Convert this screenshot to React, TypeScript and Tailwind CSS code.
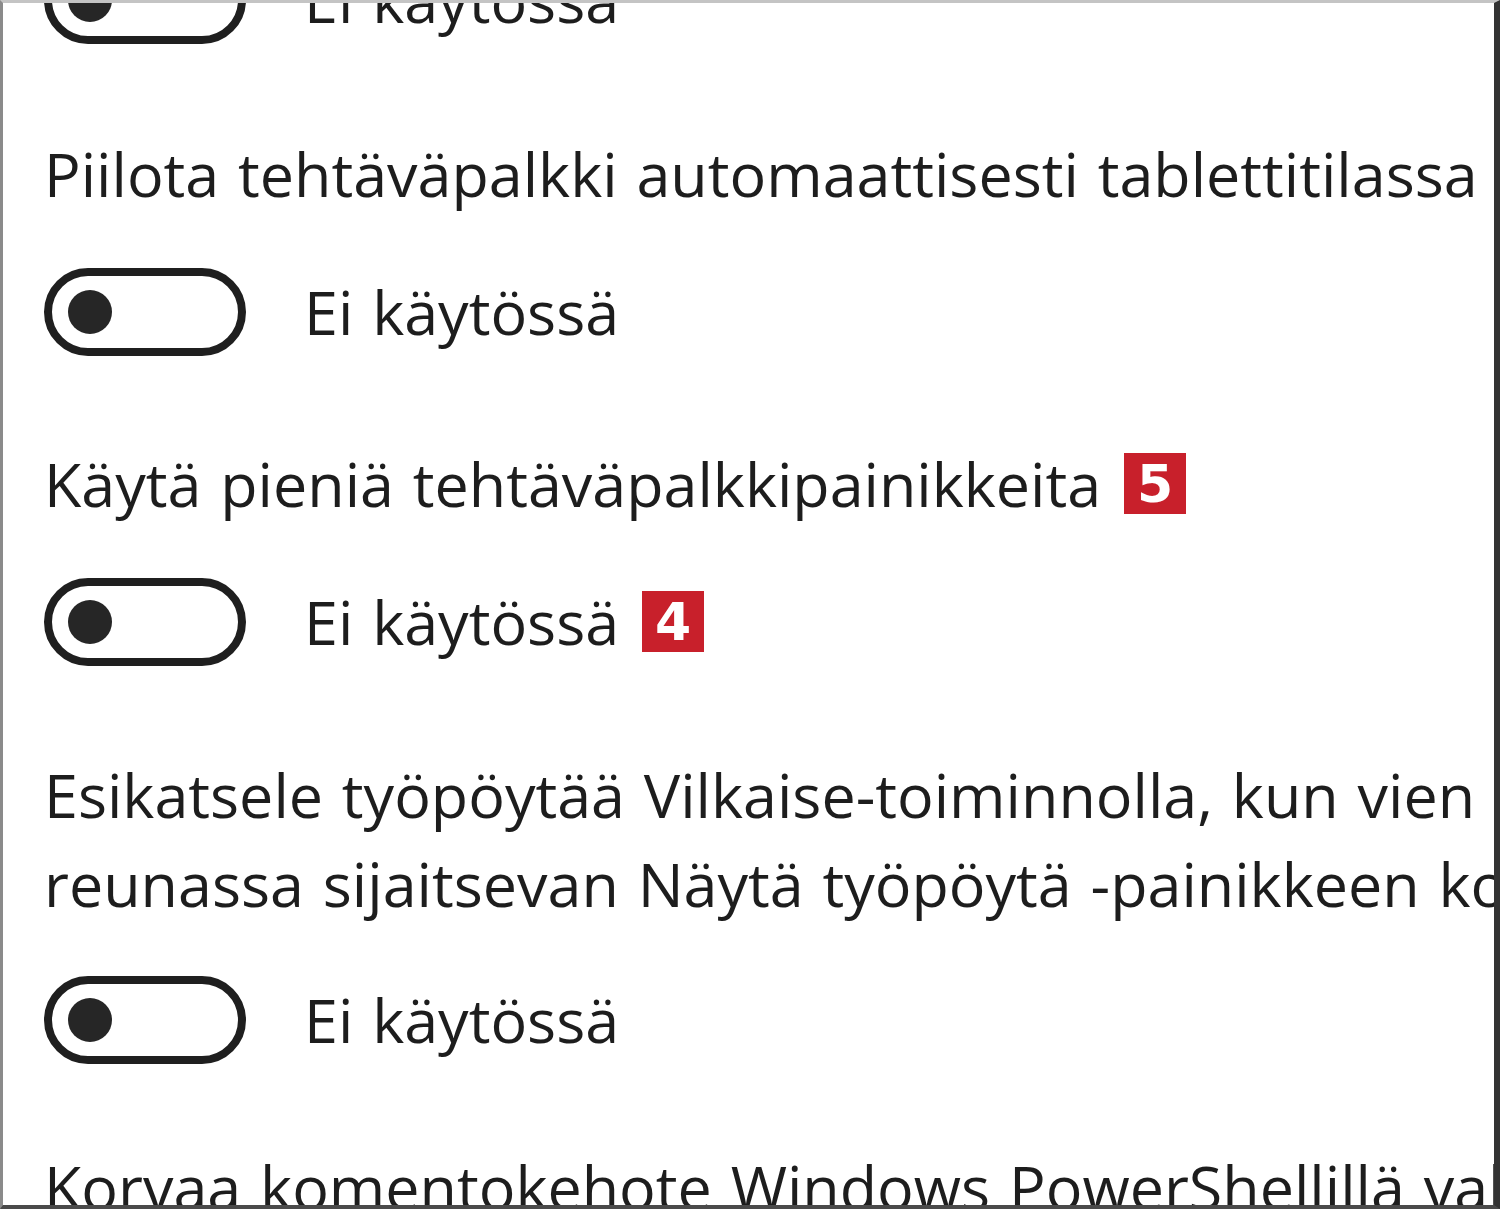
const FONT = "font-['Open_Sans',_'Noto_Sans',_sans-serif] [word-spacing:3px]"

function Toggle() {
  return (
    <div className="flex h-[88px] w-[202px] shrink-0 items-center rounded-full border-[8px] border-[#1f1f1f] pl-[16px]">
      <div className="h-[44px] w-[44px] rounded-full bg-[#262626]" />
    </div>
  )
}

function Badge({ n }: { n: string }) {
  return (
    <span className="ml-[23px] inline-flex h-[61px] w-[62px] items-center justify-center bg-[#c8202b] font-['DejaVu_Sans',_sans-serif] text-[52px] font-bold leading-none text-white">
      {n}
    </span>
  )
}

function ToggleRow({ badge }: { badge?: string }) {
  return (
    <div className="flex items-center">
      <Toggle />
      <span className="ml-[58px] text-[61px] leading-[89px]">Ei käytössä</span>
      {badge && <Badge n={badge} />}
    </div>
  )
}

export default function App() {
  return (
    <div className={`h-[1209px] w-[1500px] overflow-hidden bg-white ${FONT}`}>
      <div className="h-full w-full overflow-hidden border-t-[3px] border-b-[4px] border-l-[3px] border-r-[6px] border-t-[#c4c4c4] border-b-[#4a4a4a] border-l-[#8a8a8a] border-r-[#333333]">
        <div className="-mt-[48px] flex flex-col pl-[41px] text-[#1d1d1d]">
          <ToggleRow />

          <p className="mt-[85px] whitespace-nowrap text-[61px] leading-[89px]">
            Piilota tehtäväpalkki automaattisesti tablettitilassa
          </p>
          <div className="mt-[49px]">
            <ToggleRow />
          </div>

          <div className="mt-[83px] flex items-center">
            <p className="whitespace-nowrap text-[61px] leading-[89px]">Käytä pieniä tehtäväpalkkipainikkeita</p>
            <Badge n="5" />
          </div>
          <div className="mt-[49px]">
            <ToggleRow badge="4" />
          </div>

          <p className="mt-[84px] whitespace-nowrap text-[61px] leading-[89px]">
            Esikatsele työpöytää Vilkaise-toiminnolla, kun vien hiiren tehtäväpalkin oikeassa
            <br />
            reunassa sijaitsevan Näytä työpöytä -painikkeen kohdalle
          </p>
          <div className="mt-[47px]">
            <ToggleRow />
          </div>

          <p className="mt-[78px] whitespace-nowrap text-[61px] leading-[89px]">
            Korvaa komentokehote Windows PowerShellillä valikossa, kun napsautan Käynnistä-painiketta hiiren kakkospainikkeella
          </p>
        </div>
      </div>
    </div>
  )
}
